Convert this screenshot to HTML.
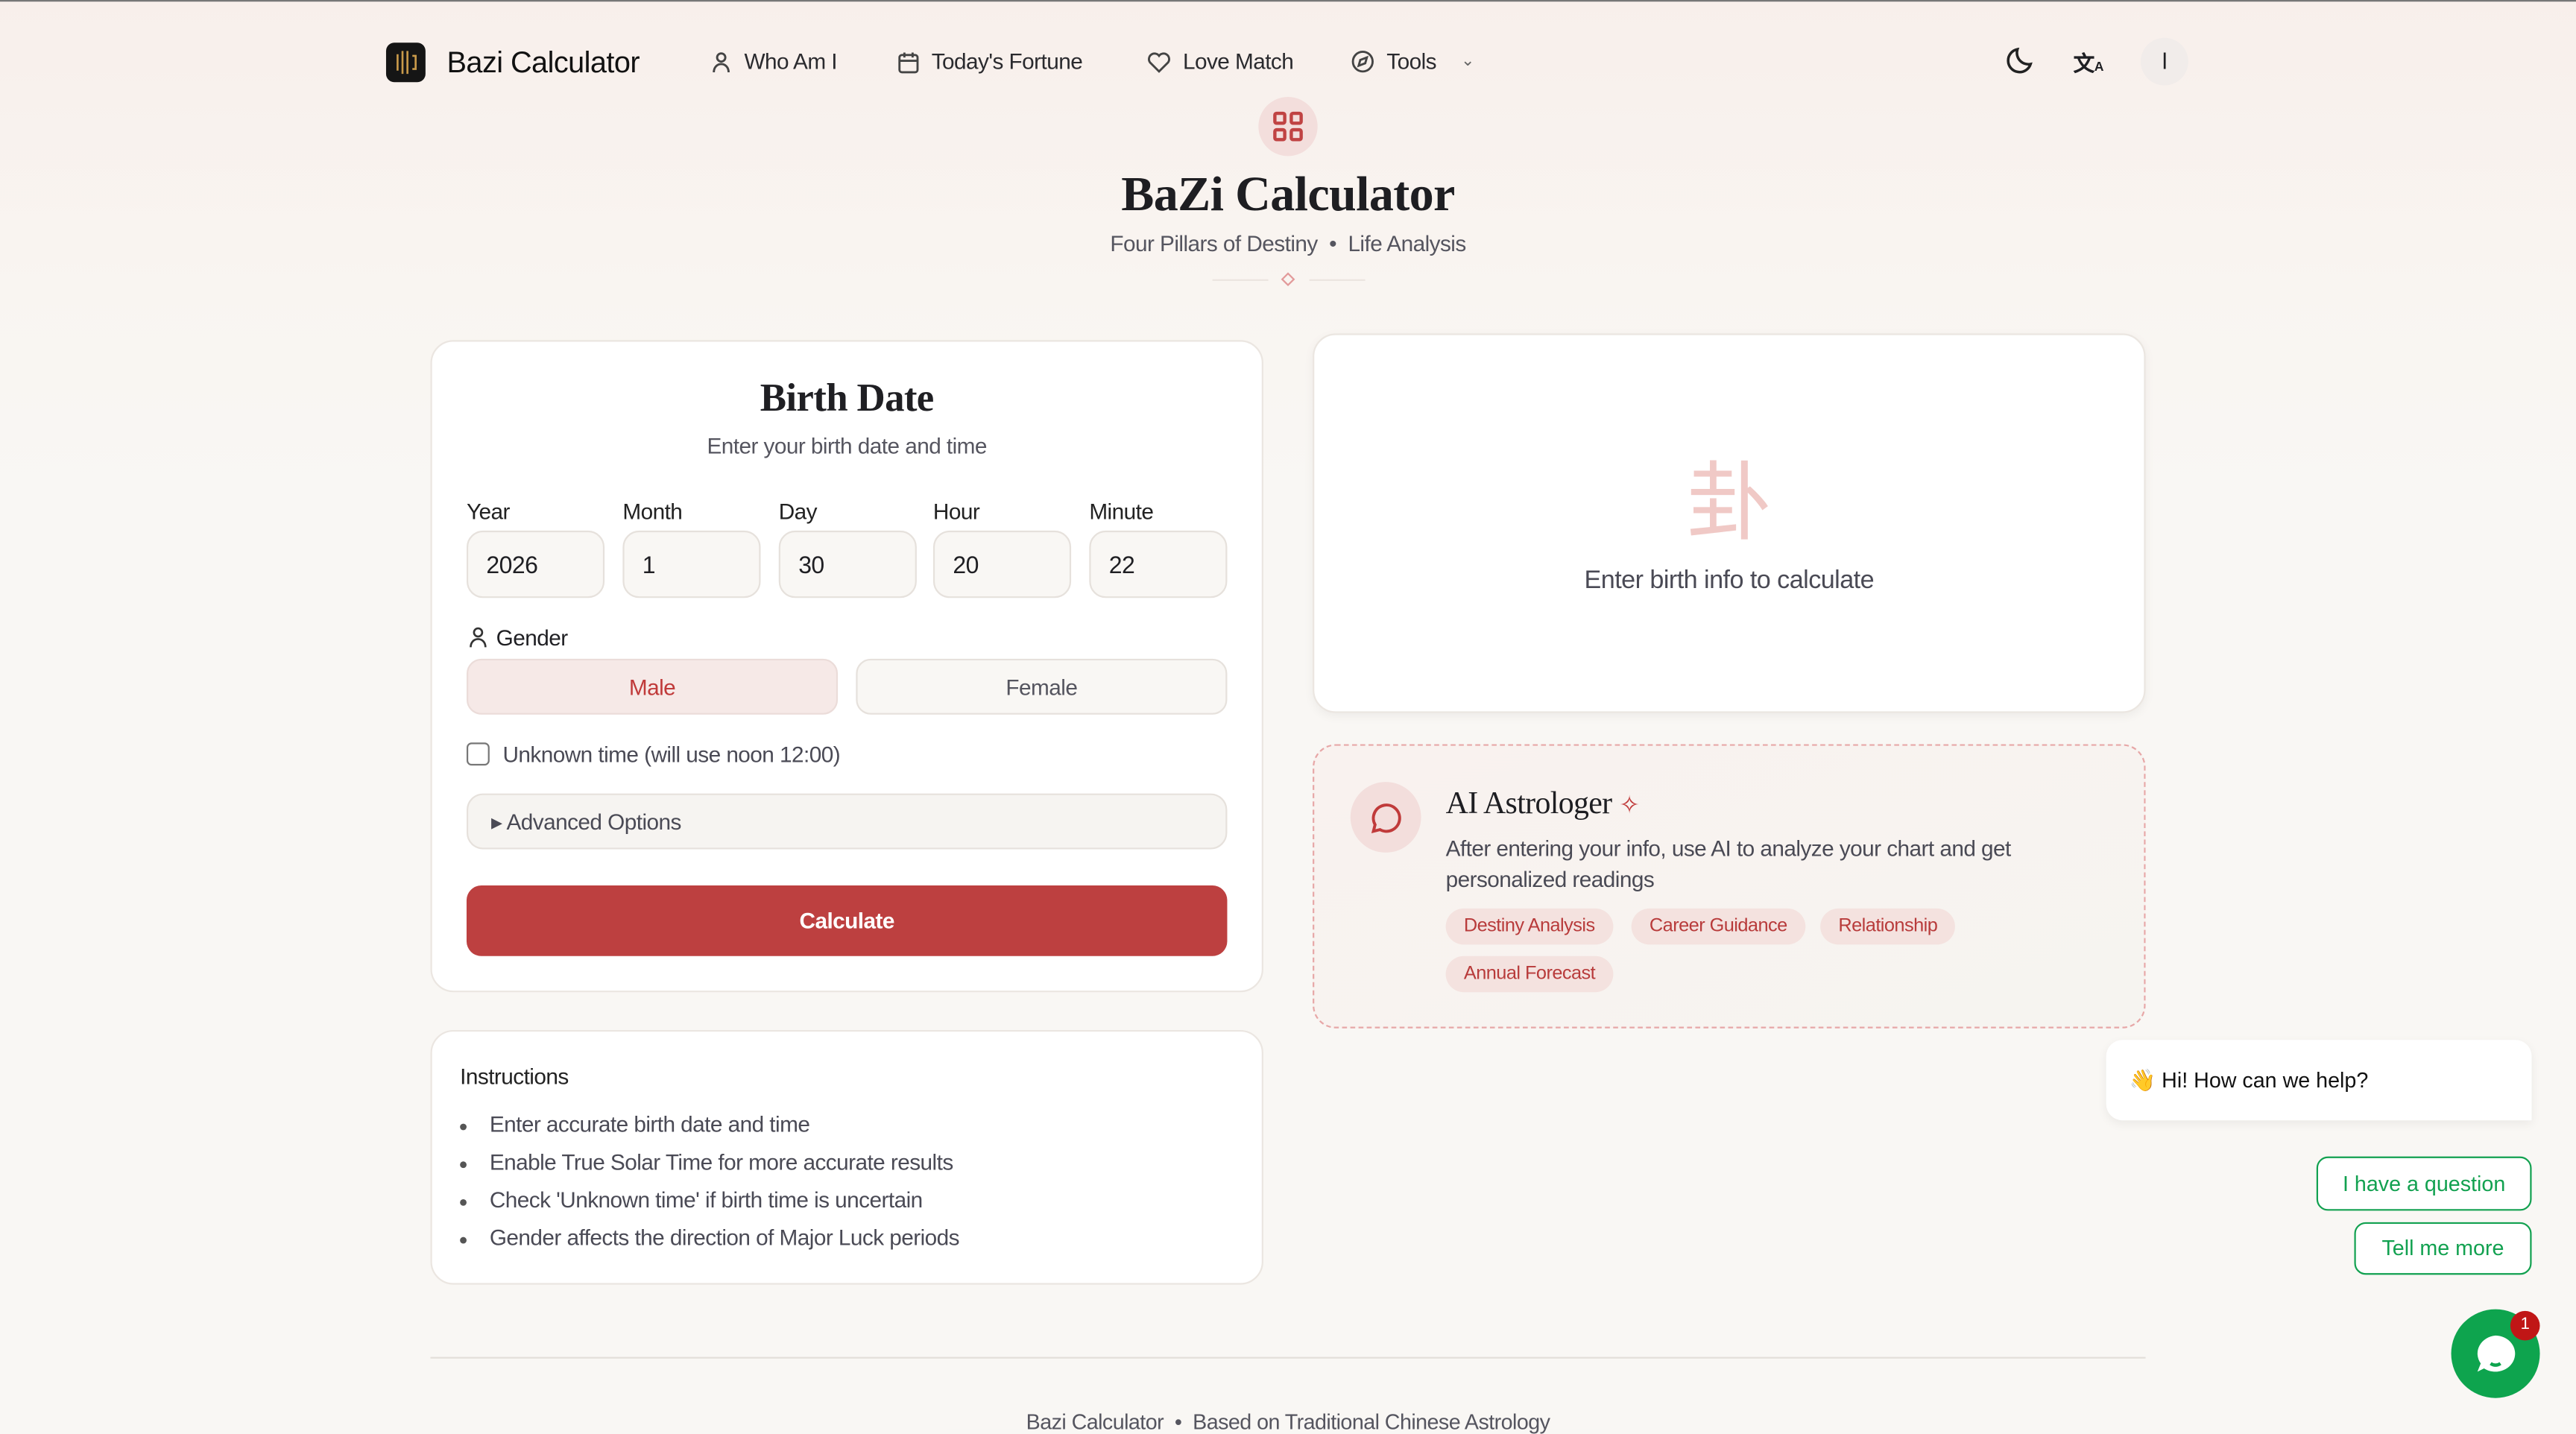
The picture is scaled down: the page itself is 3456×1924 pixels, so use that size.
<!DOCTYPE html>
<html><head><meta charset="utf-8">
<style>
*{box-sizing:border-box;margin:0;padding:0}
html,body{width:3456px;height:1918px;overflow:hidden;background:#f9f7f4}
#w{position:absolute;left:0;top:0;width:1568px;height:870px;transform:scale(2.2041);transform-origin:0 0;font-family:"Liberation Sans",sans-serif;color:#1f1f23;letter-spacing:-0.25px;
background:linear-gradient(180deg,#f8efeb 0%,#f9f5f1 20%,#f9f7f4 35%)}
.a{position:absolute}
.sans{font-family:"Liberation Sans","DejaVu Sans",sans-serif;letter-spacing:0}
.serif{font-family:"Liberation Serif",serif;font-weight:bold;letter-spacing:-0.3px}
.nav{font-size:13.5px;color:#2a2a2e;top:30px;display:flex;align-items:center;gap:7px}
.card{background:#fff;border:1px solid #ebe6e1;border-radius:14px}
.lbl{font-size:13.5px;color:#222;top:304px}
.inp{top:323px;width:84px;height:41px;border:1px solid #e6e1dc;border-radius:10px;background:#f9f7f4;font-size:14.5px;padding:13px 0 0 11px}
.tag{position:absolute;height:22px;border-radius:11px;background:#f4e2df;color:#b83b3b;font-size:11.5px;padding:5px 11px}
li{font-size:13.5px;color:#4a4a55;margin-bottom:7px;list-style:none;position:relative;padding-left:18px}
li:before{content:"";position:absolute;left:0;top:7px;width:4px;height:4px;border-radius:50%;background:#555}
</style></head><body><div id="w">
<div class="a" style="left:0;top:0;width:1568px;height:1px;background:#777"></div>
<div class="a" style="left:235px;top:26px;width:24px;height:24px;border-radius:5px;background:#151515"><svg width="24" height="24"><g stroke="#c99a4a" stroke-width="1.2" fill="none"><path d="M7 7v10M10 5v14M13 5v14M16 8h2v8h-2"/></g></svg></div>
<div class="a" style="left:272px;top:28px;font-size:18px;color:#111">Bazi Calculator</div>
<div class="a nav" style="left:432px"><svg width="14" height="14" fill="none" stroke="#444" stroke-width="1.3"><circle cx="7" cy="4" r="2.5"/><path d="M2.5 13c0-3 2-5 4.5-5s4.5 2 4.5 5"/></svg>Who Am I</div>
<div class="a nav" style="left:546px"><svg width="14" height="14" fill="none" stroke="#444" stroke-width="1.3"><rect x="1.5" y="2.5" width="11" height="10.5" rx="1.5"/><path d="M1.5 6h11M4.5 1v3M9.5 1v3"/></svg>Today's Fortune</div>
<div class="a nav" style="left:698px"><svg width="15" height="14" fill="none" stroke="#444" stroke-width="1.3"><path d="M7.5 12.5L2 7a3 3 0 0 1 5.5-4 3 3 0 0 1 5.5 4z"/></svg>Love Match</div>
<div class="a nav" style="left:822px"><svg width="15" height="15" fill="none" stroke="#444" stroke-width="1.3"><circle cx="7.5" cy="7.5" r="6"/><path d="M10 5L6 6.5 5 10l4-1.5z"/></svg>Tools <span style="font-size:10px;margin-left:8px;color:#666">⌄</span></div>
<svg class="a" style="left:1220px;top:27px" width="20" height="20" fill="none" stroke="#222" stroke-width="1.6"><path d="M16 12A7 7 0 0 1 8 3a7 7 0 1 0 8 9z"/></svg>
<div class="a" style="left:1262px;top:28px;font-size:13px;font-weight:bold">文<span style="font-size:8px">A</span></div>
<div class="a" style="left:1303px;top:23px;width:29px;height:29px;border-radius:50%;background:#f1ecea;font-size:14px;text-align:center;line-height:29px">l</div>
<div class="a" style="left:766px;top:59px;width:36px;height:36px;border-radius:50%;background:#f3dedc"></div>
<svg class="a" style="left:774px;top:67px" width="20" height="20" fill="none" stroke="#c04343" stroke-width="2"><rect x="2" y="2" width="6" height="6" rx="1"/><rect x="12" y="2" width="6" height="6" rx="1"/><rect x="2" y="12" width="6" height="6" rx="1"/><rect x="12" y="12" width="6" height="6" rx="1"/></svg>
<div class="a serif" style="left:0;width:1568px;text-align:center;top:102px;font-size:30px;color:#1e1e22">BaZi Calculator</div>
<div class="a" style="left:0;width:1568px;text-align:center;top:141px;font-size:13.5px;color:#55555f">Four Pillars of Destiny &nbsp;•&nbsp; Life Analysis</div>
<div class="a" style="left:738px;top:170px;width:34px;height:1px;background:#ebe4df"></div>
<div class="a" style="left:797px;top:170px;width:34px;height:1px;background:#ebe4df"></div>
<div class="a" style="left:781px;top:167px;width:6px;height:6px;border:1px solid #e29a9a;transform:rotate(45deg)"></div>
<div class="a card" style="left:262px;top:207px;width:507px;height:397px"></div>
<div class="a serif" style="left:262px;width:507px;text-align:center;top:230px;font-size:24px">Birth Date</div>
<div class="a" style="left:262px;width:507px;text-align:center;top:264px;font-size:13.5px;color:#55555f">Enter your birth date and time</div>
<div class="a lbl" style="left:284px">Year</div><div class="a lbl" style="left:379px">Month</div><div class="a lbl" style="left:474px">Day</div><div class="a lbl" style="left:568px">Hour</div><div class="a lbl" style="left:663px">Minute</div>
<div class="a inp" style="left:284px">2026</div><div class="a inp" style="left:379px">1</div><div class="a inp" style="left:474px">30</div><div class="a inp" style="left:568px">20</div><div class="a inp" style="left:663px">22</div>
<svg class="a" style="left:285px;top:381px" width="12" height="14" fill="none" stroke="#333" stroke-width="1.2"><circle cx="6" cy="4" r="2.5"/><path d="M1.5 13c0-3 2-5 4.5-5s4.5 2 4.5 5"/></svg>
<div class="a" style="left:302px;top:381px;font-size:13.5px">Gender</div>
<div class="a" style="left:284px;top:401px;width:226px;height:34px;border-radius:9px;background:#f6e9e7;border:1px solid #ebdcd9;color:#c03a3a;font-size:13.5px;text-align:center;line-height:34px">Male</div>
<div class="a" style="left:521px;top:401px;width:226px;height:34px;border-radius:9px;background:#f9f7f4;border:1px solid #e6e1dc;color:#55555f;font-size:13.5px;text-align:center;line-height:34px">Female</div>
<div class="a" style="left:284px;top:452px;width:14px;height:14px;border:1px solid #777;border-radius:3px"></div>
<div class="a" style="left:306px;top:452px;font-size:13.5px;color:#4a4a55">Unknown time (will use noon 12:00)</div>
<div class="a" style="left:284px;top:483px;width:463px;height:34px;border-radius:10px;background:#f6f4f1;border:1px solid #e6e1dc;font-size:13.5px;color:#4a4a55;padding:9px 0 0 14px">▸ Advanced Options</div>
<div class="a" style="left:284px;top:539px;width:463px;height:43px;border-radius:9px;background:#bd4040;color:#fff;font-size:13.5px;font-weight:bold;text-align:center;line-height:44px">Calculate</div>
<div class="a card" style="left:262px;top:627px;width:507px;height:155px"></div>
<div class="a" style="left:280px;top:648px;font-size:13.5px;color:#222">Instructions</div>
<ul class="a" style="left:280px;top:677px">
<li style="margin-bottom:8px">Enter accurate birth date and time</li><li style="margin-bottom:8px">Enable True Solar Time for more accurate results</li><li style="margin-bottom:8px">Check 'Unknown time' if birth time is uncertain</li><li>Gender affects the direction of Major Luck periods</li></ul>
<div class="a card" style="left:799px;top:203px;width:507px;height:231px;box-shadow:0 2px 6px rgba(0,0,0,.05)"></div>
<div class="a" style="left:799px;width:507px;text-align:center;top:270px;font-size:52px;color:#f0c9c6;font-family:'Noto Sans CJK SC',sans-serif;line-height:64px">卦</div>
<div class="a" style="left:799px;width:507px;text-align:center;top:345px;font-size:15.5px;color:#4a4a55">Enter birth info to calculate</div>
<div class="a" style="left:799px;top:453px;width:507px;height:173px;border:1.5px dashed #e7a7a7;border-radius:14px;background:linear-gradient(160deg,#f9f2ef,#f6f4f0)"></div>
<div class="a" style="left:822px;top:476px;width:43px;height:43px;border-radius:50%;background:#f3dedc"></div>
<svg class="a" style="left:832px;top:486px" width="23" height="23" fill="none" stroke="#c03a3a" stroke-width="1.8"><path d="M4 20l1-4A8 8 0 1 1 8 19z"/></svg>
<div class="a serif" style="left:880px;top:479px;font-size:19px;font-weight:normal;color:#1e1e22">AI Astrologer <span style="color:#c03a3a;font-size:15px">✧</span></div>
<div class="a" style="left:880px;top:507px;width:380px;font-size:13.5px;line-height:19px;color:#4a4a55">After entering your info, use AI to analyze your chart and get personalized readings</div>
<div class="tag" style="left:880px;top:553px">Destiny Analysis</div>
<div class="tag" style="left:993px;top:553px">Career Guidance</div>
<div class="tag" style="left:1108px;top:553px">Relationship</div>
<div class="tag" style="left:880px;top:582px">Annual Forecast</div>
<div class="a sans" style="left:1282px;top:633px;width:259px;height:49px;background:#fff;border-radius:10px 10px 0 10px;box-shadow:0 2px 6px rgba(0,0,0,.06);font-size:13px;padding:17px 0 0 14px;color:#111">👋 Hi! How can we help?</div>
<div class="a sans" style="left:1410px;top:704px;width:131px;height:33px;border:1.5px solid #12a150;border-radius:7px;background:#fff;color:#12a150;font-size:13px;text-align:center;line-height:31px">I have a question</div>
<div class="a sans" style="left:1433px;top:744px;width:108px;height:32px;border:1.5px solid #12a150;border-radius:7px;background:#fff;color:#12a150;font-size:13px;text-align:center;line-height:30px">Tell me more</div>
<div class="a" style="left:1492px;top:797px;width:54px;height:54px;border-radius:50%;background:#0ea44e"></div>
<svg class="a" style="left:1504px;top:810px" width="30" height="30"><path d="M15 3a12 11 0 1 1-7 20l-4 2 2-5A12 11 0 0 1 15 3z" fill="#fff"/><path d="M12 20q3 2 6 0" stroke="#0ea44e" stroke-width="2" fill="none"/></svg>
<div class="a sans" style="left:1528px;top:798px;width:18px;height:18px;border-radius:50%;background:#c01616;color:#fff;font-size:10px;text-align:center;line-height:18px">1</div>
<div class="a" style="left:262px;top:826px;width:1044px;height:1px;background:#e3dfda"></div>
<div class="a" style="left:0;width:1568px;text-align:center;top:858px;font-size:13px;color:#55555f">Bazi Calculator &nbsp;•&nbsp; Based on Traditional Chinese Astrology</div>
</div></body></html>
